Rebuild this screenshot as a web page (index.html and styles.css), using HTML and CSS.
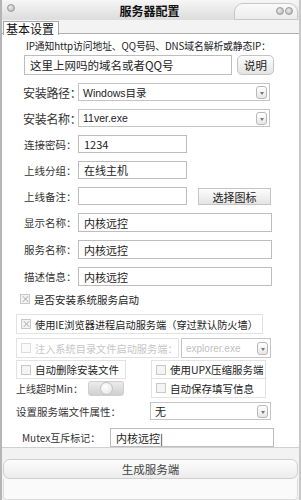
FILE: index.html
```html
<!DOCTYPE html>
<html lang="zh-CN">
<head>
    <meta charset="UTF-8">
    <title>服务器配置</title>
    <link rel="stylesheet" href="styles.css">
</head>
<body>
<div class="window">
    <div class="titlebar">
        <span class="dot left-dot"></span>
        <span class="title">服务器配置</span>
        <div class="bump"><span class="dot"></span><span class="dot"></span></div>
    </div>
    <div class="tabs"><span class="tab">基本设置</span></div>
    <div class="panel">
        <div class="note">IP通知http访问地址、QQ号码、DNS域名解析或静态IP：</div>
        <div class="row r-first">
            <input class="field wide" value="这里上网吗的域名或者QQ号">
            <button class="btn help-btn">说明</button>
        </div>
        <div class="row r-sel">
            <label class="big">安装路径：</label>
            <div class="select sel-main"><span>Windows目录</span><i class="arrow"></i></div>
        </div>
        <div class="row r-sel">
            <label class="big">安装名称：</label>
            <div class="select sel-main"><span>11ver.exe</span><i class="arrow"></i></div>
        </div>
        <div class="row r-in">
            <label>连接密码：</label>
            <input class="field short" value="1234">
        </div>
        <div class="row r-in">
            <label>上线分组：</label>
            <input class="field short" value="在线主机">
        </div>
        <div class="row r-in">
            <label>上线备注：</label>
            <input class="field short" value="">
            <button class="btn icon-btn">选择图标</button>
        </div>
        <div class="row r-long">
            <label>显示名称：</label>
            <input class="field long" value="内核远控">
        </div>
        <div class="row r-long">
            <label>服务名称：</label>
            <input class="field long" value="内核远控">
        </div>
        <div class="row r-long">
            <label>描述信息：</label>
            <input class="field long" value="内核远控">
        </div>
        <div class="row r-check">
            <span class="box checked"></span><span>是否安装系统服务启动</span>
        </div>
        <div class="row r-ie">
            <div class="group ie"><span class="box checked"></span><span>使用IE浏览器进程启动服务端（穿过默认防火墙）</span></div>
        </div>
        <div class="row r-inject">
            <div class="group inject disabled"><span class="box"></span><span>注入系统目录文件启动服务端：</span></div>
            <div class="select sel-inject disabled"><span>explorer.exe</span><i class="arrow"></i></div>
        </div>
        <div class="row r-pair">
            <div class="group g-del"><span class="box"></span><span>自动删除安装文件</span></div>
            <div class="group g-right"><span class="box"></span><span>使用UPX压缩服务端</span></div>
        </div>
        <div class="row r-pair2">
            <label class="timeout">上线超时Min：</label>
            <div class="toggle"><span class="knob"></span></div>
            <div class="group g-right"><span class="box"></span><span>自动保存填写信息</span></div>
        </div>
        <div class="row r-attr">
            <label class="attr">设置服务端文件属性：</label>
            <div class="select sel-attr"><span>无</span><i class="arrow"></i></div>
        </div>
        <div class="row r-mutex">
            <label class="mutex">Mutex互斥标记：</label>
            <input class="field mutex-field" value="内核远控|">
        </div>
    </div>
    <div class="footer">
        <button class="gen-btn">生成服务端</button>
        <div class="footer-bar"></div>
    </div>
</div>
</body>
</html>
```

FILE: styles.css
```css
* {
    box-sizing: border-box;
}
body {
    margin: 0;
    font-family: "Noto Sans CJK SC", "Liberation Sans", sans-serif;
    font-size: 11px;
    color: #222;
    background: #fff;
}
.window {
    width: 301px;
    height: 500px;
    background: #e9e9e9;
    border-left: 2px solid #b5b5b5;
    border-right: 2px solid #c8c8c8;
    display: flex;
    flex-direction: column;
}
.titlebar {
    height: 21px;
    display: flex;
    align-items: center;
    background: linear-gradient(#f6f6f6, #dcdcdc);
}
.title {
    flex: 1;
    text-align: center;
    font-weight: bold;
    font-size: 12px;
    color: #111;
    padding-left: 50px;
}
.dot {
    width: 8px;
    height: 8px;
    border-radius: 50%;
    background: radial-gradient(circle at 40% 40%, #eee, #aaa);
    border: 1px solid #999;
    display: inline-block;
}
.left-dot {
    margin-left: 5px;
    margin-top: -4px;
}
.bump {
    width: 64px;
    height: 17px;
    margin-right: 1px;
    border: 1px solid #c8c8c8;
    border-radius: 9px 9px 0 0;
    background: linear-gradient(#fafafa, #ececec);
    display: flex;
    justify-content: flex-end;
    align-items: center;
    gap: 1px;
    padding-right: 4px;
    margin-top: 2px;
}
.tabs {
    height: 14px;
    background: #f3f3f3;
    border-bottom: 1px solid #b0b0b0;
    position: relative;
}
.tab {
    position: absolute;
    left: 1px;
    top: 1px;
    height: 14px;
    padding: 0 4px 0 2px;
    font-size: 12px;
    line-height: 13px;
    background: #fff;
    border: 1px solid #a8a8a8;
    border-bottom: none;
    color: #111;
}
.panel {
    height: 422px;
    background: #fff;
    border-bottom: 1px solid #d0d0d0;
    padding: 5px 0 0 18px;
    display: flex;
    flex-direction: column;
}
.note {
    padding-left: 6px;
    height: 14px;
    line-height: 14px;
    font-size: 9.8px;
    letter-spacing: -0.1px;
    color: #222;
    white-space: nowrap;
}
.row {
    display: flex;
    align-items: center;
}
.r-first { margin-top: 2px; height: 20px; padding-left: 4px; }
.r-sel { margin-top: 8px; height: 18px; }
.r-in { margin-top: 8px; height: 18px; }
.r-long { margin-top: 8px; height: 19px; }
.r-check { margin-top: 7px; height: 12px; gap: 4px; }
.r-ie { margin-top: 9px; height: 20px; margin-left: -4px; }
.r-inject { margin-top: 4px; height: 20px; margin-left: -4px; }
.r-pair { margin-top: 2px; height: 19px; margin-left: -4px; }
.r-pair2 { margin-top: -1px; height: 20px; margin-left: -4px; }
.r-attr { margin-top: 4px; height: 18px; margin-left: -4px; }
.r-mutex { margin-top: 8px; height: 19px; }
label {
    flex: none;
    width: 58px;
    padding-left: 4px;
    color: #333;
    font-size: 10.5px;
    white-space: nowrap;
}
label.big {
    font-size: 12px;
    letter-spacing: -0.3px;
    padding-left: 3px;
    color: #333;
}
.field {
    height: 100%;
    border: 1px solid #bdbdbd;
    font-family: inherit;
    font-size: 11px;
    color: #222;
    padding: 0 5px;
    background: #fff;
    outline: none;
}
.field.wide {
    width: 208px;
    font-size: 11.5px;
}
.field.short { width: 109px; }
.field.long { width: 194px; }
.btn {
    font-family: inherit;
    font-size: 11px;
    color: #222;
    border: 1px solid #c4c4c4;
    border-radius: 3px;
    background: linear-gradient(#fdfdfd, #e4e4e4);
    height: 100%;
    padding: 0;
}
.help-btn {
    width: 37px;
    margin-left: 5px;
    font-size: 11.5px;
    border-radius: 5px;
}
.icon-btn {
    width: 73px;
    margin-left: 11px;
    height: 17px;
    border-radius: 0;
}
.select {
    height: 100%;
    border: 1px solid #c4c4c4;
    display: flex;
    align-items: center;
    justify-content: space-between;
    padding: 0 2px 0 4px;
    background: #fff;
}
.select span {
    font-size: 10.5px;
    font-family: "Liberation Sans", "Noto Sans CJK SC", sans-serif;
}
.sel-main { width: 192px; }
.arrow {
    width: 11px;
    height: 13px;
    border: 1px solid #b8b8b8;
    border-radius: 3px;
    background: linear-gradient(#fff, #e6e6e6);
    position: relative;
}
.arrow::after {
    content: "";
    position: absolute;
    left: 3px;
    top: 5px;
    border-left: 2px solid transparent;
    border-right: 2px solid transparent;
    border-top: 3px solid #777;
}
.box {
    width: 10px;
    height: 10px;
    border: 1px solid #c8c8c8;
    background: #f4f4f4;
    display: inline-block;
    flex: none;
    position: relative;
}
.box.checked::before,
.box.checked::after {
    content: "";
    position: absolute;
    left: 4px;
    top: 0;
    width: 1px;
    height: 8px;
    background: #bbb;
    transform: rotate(45deg);
}
.box.checked::after {
    transform: rotate(-45deg);
}
.r-check span:last-child {
    font-size: 10.5px;
}
.group {
    height: 100%;
    border: 1px solid #e2e2e2;
    display: flex;
    align-items: center;
    gap: 4px;
    padding-left: 4px;
    font-size: 10.5px;
    white-space: nowrap;
    overflow: hidden;
}
.group.ie { width: 247px; font-size: 10.2px; }
.group.inject { width: 163px; font-size: 10.2px; }
.disabled { color: #c6c6c6; }
.disabled .box { border-color: #ddd; background: #fafafa; }
.sel-inject {
    width: 90px;
    margin-left: 2px;
    height: 20px;
}
.sel-inject span { font-size: 10px; color: #c0c0c0; }
.g-del { width: 110px; }
.g-right { width: 115px; }
.r-pair .g-right { margin-left: 25px; }
label.timeout {
    width: 72px;
    padding-left: 0;
    font-size: 10px;
}
.toggle {
    width: 36px;
    height: 15px;
    border-radius: 3px;
    background: linear-gradient(#ececec, #cfcfcf);
    border: 1px solid #cfcfcf;
    display: flex;
    align-items: center;
    justify-content: center;
}
.knob {
    width: 13px;
    height: 13px;
    border-radius: 50%;
    background: radial-gradient(circle at 40% 35%, #fff, #e2e2e2);
    border: 1px solid #c2c2c2;
}
.r-pair2 .g-right { margin-left: 27px; }
label.attr {
    width: 134px;
    padding-left: 0;
    font-size: 10.5px;
}
.sel-attr { width: 121px; }
.sel-attr span { font-size: 11px; font-family: "Noto Sans CJK SC", sans-serif; }
label.mutex {
    width: 90px;
    padding-left: 2px;
    font-size: 10px;
}
.mutex-field {
    width: 164px;
    font-size: 11px;
}
.footer {
    flex: 1;
    background: #f2f2f2;
    padding: 11px 0 0 1px;
    display: flex;
    flex-direction: column;
}
.gen-btn {
    height: 20px;
    width: 295px;
    border: 1px solid #cfcfcf;
    border-radius: 7px;
    background: linear-gradient(#fdfdfd, #ececec);
    font-family: inherit;
    font-size: 11.5px;
    color: #444;
    padding: 0;
}
.footer-bar {
    height: 21px;
    width: 295px;
    border: 1px solid #dcdcdc;
    border-top: none;
    border-radius: 0 0 4px 4px;
    background: #fafafa;
}
```
